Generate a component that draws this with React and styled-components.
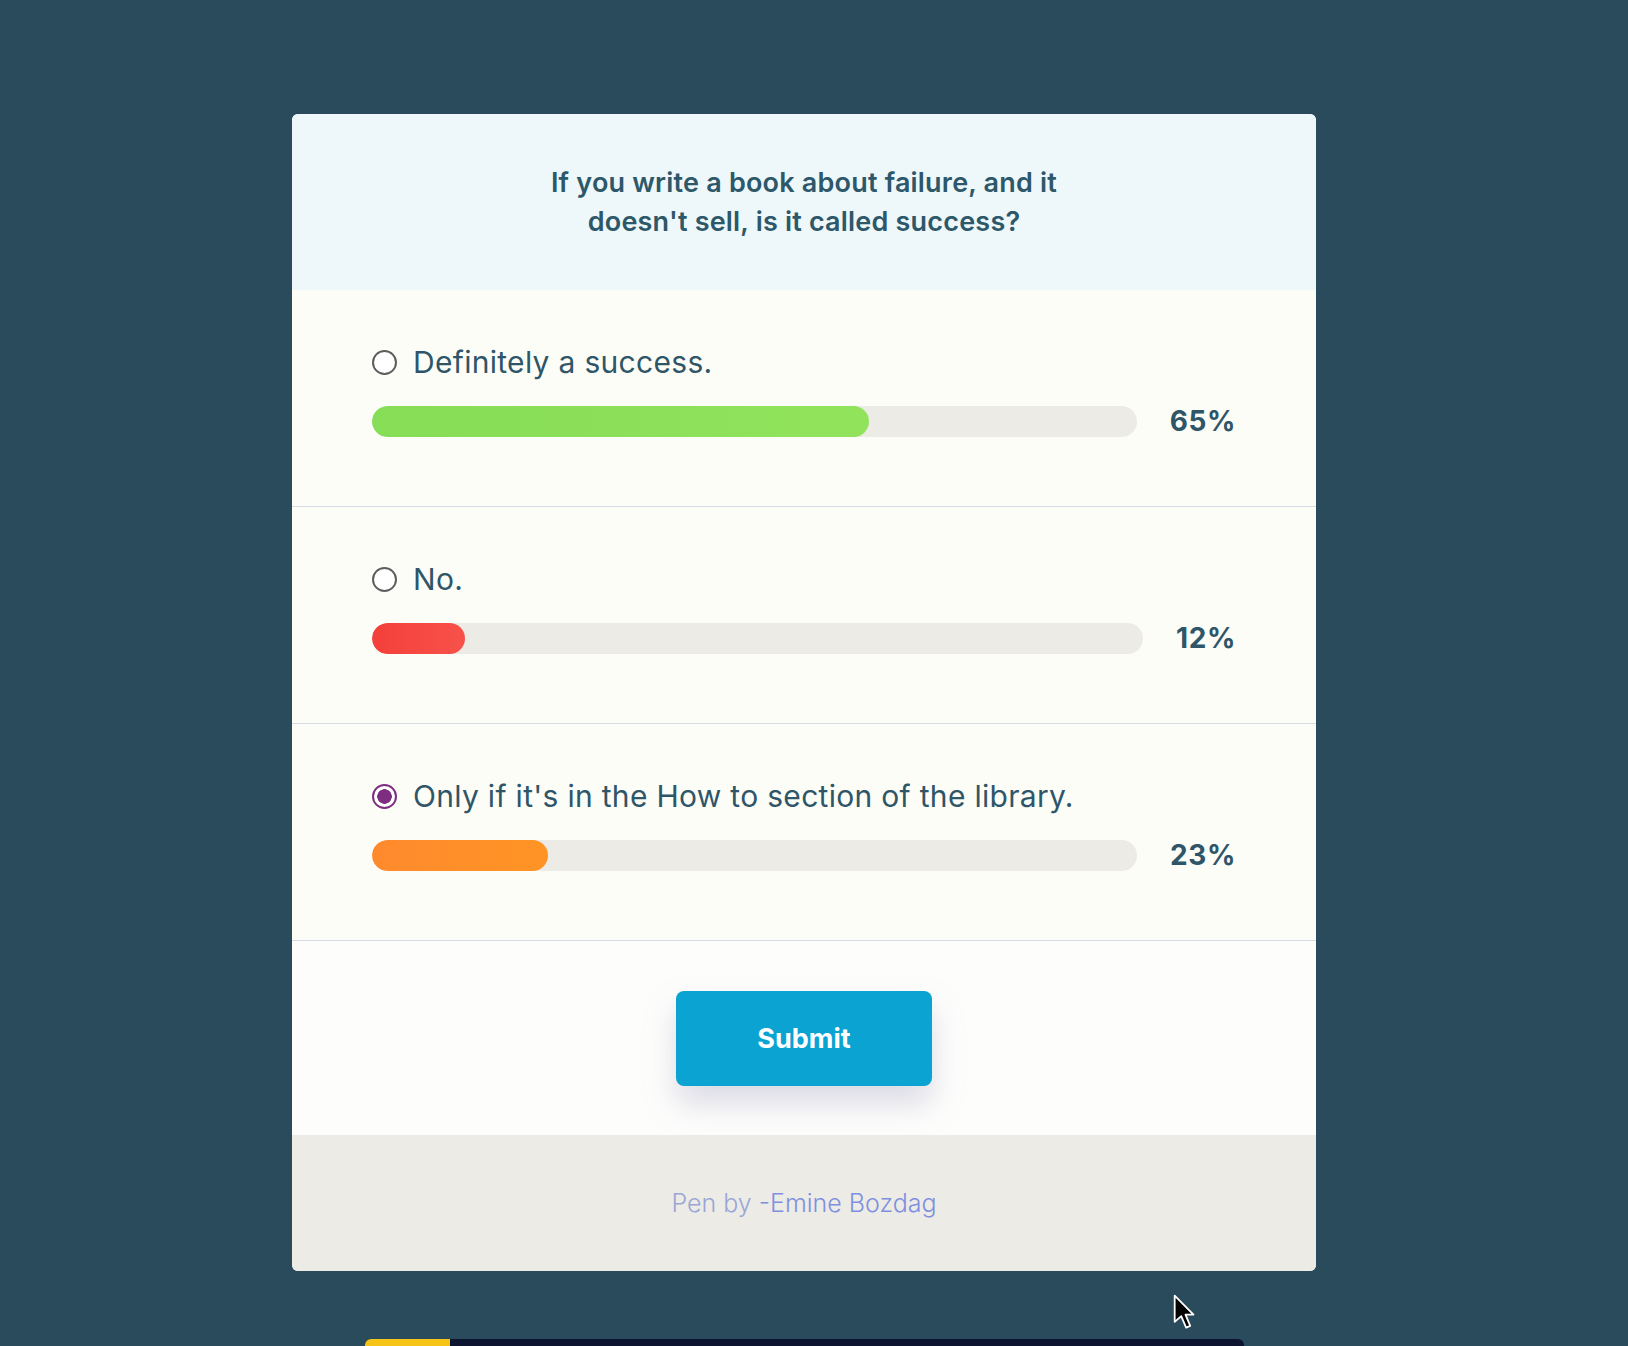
import React from "react";
import styled, { createGlobalStyle } from "styled-components";

const options = [
  { label: "Definitely a success.", percent: 65, color: "linear-gradient(90deg, #86dd56, #92e35c)" },
  { label: "No.", percent: 12, color: "linear-gradient(90deg, #f43f3a, #f7524a)" },
  { label: "Only if it's in the How to section of the library.", percent: 23, color: "linear-gradient(90deg, #ff8a2e, #ff9424)", checked: true },
];

const App = () => {
  return (
    <Page>
      <GlobalStyle />
      <Card>
        {/* Question */}
        <Header>
          <Question>
            If you write a book about failure, and it
            <br />
            doesn't sell, is it called success?
          </Question>
        </Header>

        {/* Answers */}
        {options.map((o) => (
          <Option key={o.label}>
            <OptionLabel>
              <Radio checked={o.checked} />
              <span>{o.label}</span>
            </OptionLabel>
            <BarRow>
              <Track>
                <Fill $color={o.color} style={{ width: `${o.percent}%` }} />
              </Track>
              <Percent>{o.percent}%</Percent>
            </BarRow>
          </Option>
        ))}

        {/* Submit */}
        <SubmitRow>
          <SubmitBtn>Submit</SubmitBtn>
        </SubmitRow>

        <Footer>
          <FooterText>
            Pen by <FooterLink>-Emine Bozdag</FooterLink>
          </FooterText>
        </Footer>
      </Card>
      <BottomBar>
        <BottomProgress />
      </BottomBar>
      <Cursor viewBox="0 0 14 22">
        <path d="M1 1 L1 17 L5 13.5 L8 20.5 L10.5 19.5 L7.6 12.6 L12.5 12.6 Z" fill="#000" stroke="#fff" strokeWidth="1.1" strokeLinejoin="round" />
      </Cursor>
    </Page>
  );
};

const GlobalStyle = createGlobalStyle`
  html, body {
    margin: 0;
    padding: 0;
    background: #2a4b5c;
  }
  body {
    font-family: Inter, "Noto Sans", sans-serif;
  }
`;

const Page = styled.div`
  position: relative;
  display: flex;
  flex-direction: column;
  align-items: center;
  width: calc(100% - 20px);
  height: 1346px;
  overflow: hidden;
  padding-top: 114px;
  box-sizing: border-box;
`;

const Card = styled.div`
  flex: none;
  width: 1024px;
  background: #fdfdfb;
  border-radius: 6px;
  overflow: hidden;
`;

const Header = styled.div`
  display: flex;
  justify-content: center;
  align-items: center;
  box-sizing: border-box;
  height: 176px;
  background: #eef7fa;
`;

const Question = styled.h2`
  margin: 0;
  font-weight: 600;
  font-size: 27px;
  line-height: 39px;
  letter-spacing: 0.2px;
  color: #2d5869;
  text-align: center;
`;

const Option = styled.div`
  padding: 55px 80px 69px;
  border-bottom: 1px solid #d6dce6;
  background: #fdfdf8;
`;

const OptionLabel = styled.label`
  display: flex;
  align-items: center;
  gap: 16px;
  font-size: 30px;
  line-height: 35px;
  letter-spacing: 0.3px;
  color: #2f5668;
`;

const Radio = styled.span`
  flex: none;
  box-sizing: border-box;
  width: 25px;
  height: 25px;
  border-radius: 50%;
  border: 2px solid ${(p) => (p.checked ? "#7d2e80" : "#5e5e5e")};
  background: ${(p) => (p.checked ? "radial-gradient(circle, #7d2e80 0 7px, #fff 7.5px)" : "#fff")};
`;

const BarRow = styled.div`
  display: flex;
  align-items: center;
  gap: 33px;
  height: 31px;
  margin-top: 26px;
`;

const Track = styled.div`
  flex: 1;
  height: 31px;
  border-radius: 16px;
  background: #ecebe6;
  overflow: hidden;
`;

const Fill = styled.div`
  height: 100%;
  border-radius: 16px;
  background: ${(p) => p.$color};
`;

const Percent = styled.span`
  font-family: Inter, sans-serif;
  font-weight: 700;
  font-size: 28px;
  line-height: 31px;
  letter-spacing: 0.6px;
  color: #2f5668;
`;

const SubmitRow = styled.div`
  display: flex;
  justify-content: center;
  padding: 50px 0 49px;
  background: #fdfdfc;
`;

const SubmitBtn = styled.button`
  width: 256px;
  height: 95px;
  border: none;
  border-radius: 8px;
  background: #0aa3d2;
  color: #fff;
  font-family: Inter, sans-serif;
  font-weight: 700;
  font-size: 27px;
  box-shadow: 0 18px 30px rgba(160, 160, 190, 0.35);
  cursor: pointer;
`;

const Footer = styled.div`
  display: flex;
  justify-content: center;
  align-items: center;
  height: 136px;
  background: #ecebe6;
`;

const FooterText = styled.p`
  margin: 0;
  font-family: Inter, sans-serif;
  font-weight: 300;
  font-size: 25px;
  color: #9aa6d6;
`;

const FooterLink = styled.span`
  color: #7f90e0;
`;

const BottomBar = styled.div`
  margin-top: 68px;
  width: 879px;
  height: 12px;
  flex: none;
  border-radius: 6px 6px 0 0;
  background: #0c1430;
  overflow: hidden;
`;

const BottomProgress = styled.div`
  width: 85px;
  height: 100%;
  background: #f5c417;
`;

const Cursor = styled.svg`
  position: absolute;
  left: 1173px;
  top: 1294px;
  width: 23px;
  height: 36px;
`;

export default App;
